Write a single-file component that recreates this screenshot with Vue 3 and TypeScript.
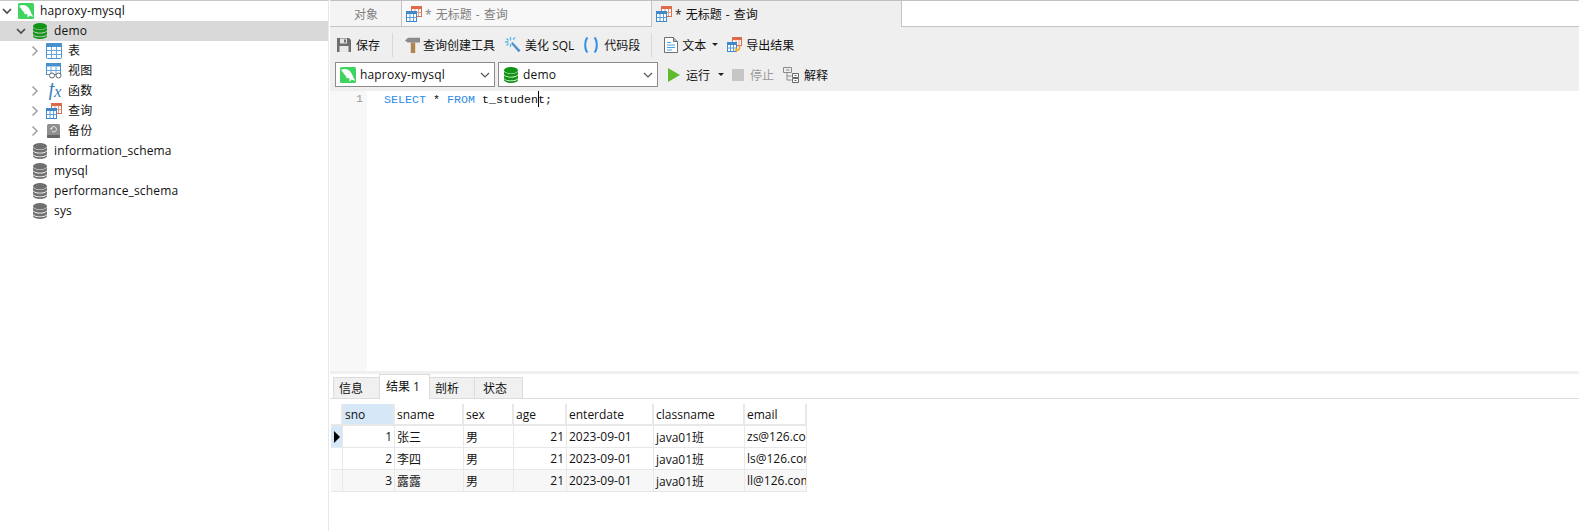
<script setup lang="ts">
interface TreeNode {
  label: string;
  level: number;
  icon: string;
  arrow: "open" | "closed" | "none";
  selected?: boolean;
}

const tree: TreeNode[] = [
  { label: "haproxy-mysql", level: 0, icon: "conn", arrow: "open" },
  { label: "demo", level: 1, icon: "db-green", arrow: "open", selected: true },
  { label: "表", level: 2, icon: "table", arrow: "closed" },
  { label: "视图", level: 2, icon: "view", arrow: "none" },
  { label: "函数", level: 2, icon: "fx", arrow: "closed" },
  { label: "查询", level: 2, icon: "query", arrow: "closed" },
  { label: "备份", level: 2, icon: "backup", arrow: "closed" },
  { label: "information_schema", level: 1, icon: "db-gray", arrow: "none" },
  { label: "mysql", level: 1, icon: "db-gray", arrow: "none" },
  { label: "performance_schema", level: 1, icon: "db-gray", arrow: "none" },
  { label: "sys", level: 1, icon: "db-gray", arrow: "none" },
];

const columns = ["sno", "sname", "sex", "age", "enterdate", "classname", "email"];

const rows = [
  { sno: 1, sname: "张三", sex: "男", age: 21, date: "2023-09-01", cls: "java01班", email: "zs@126.com" },
  { sno: 2, sname: "李四", sex: "男", age: 21, date: "2023-09-01", cls: "java01班", email: "ls@126.com" },
  { sno: 3, sname: "露露", sex: "男", age: 21, date: "2023-09-01", cls: "java01班", email: "ll@126.com" },
];

const resultTabs = ["信息", "结果 1", "剖析", "状态"];
</script>

<template>
  <svg class="sprite" aria-hidden="true">
    <symbol id="conn" viewBox="0 0 16 16">
      <rect width="16" height="16" rx="1.5" fill="#3fd45f" />
      <path d="M1 3C3 2 6 1.600 8.500 3 11 4.500 12 7 13 9.500 13.500 11 14.500 12.500 15.500 13.500 14 13.500 12.800 13.200 11.500 12.400 11 13.300 10.500 14 9.500 14.500 9.800 13 9.500 12 9 11 8 11.300 7 11.200 6 10.800 6.300 10.300 6.400 9.800 6.300 9.300 4.800 8.300 3.800 6.800 3.200 5.500 2.400 4.800 1.600 4 1 3z" fill="#fff" />
    </symbol>
    <symbol id="db-green" viewBox="0 0 16 16">
      <ellipse cx="8" cy="3.200" rx="7" ry="3.200" fill="#129417" />
      <path d="M1 4.400c1.200 1.500 3.800 2.300 7 2.300s5.800-.8 7-2.300v2.900c-.6 1.500-3.400 2.500-7 2.500s-6.400-1-7-2.500z" fill="#129417" />
      <path d="M1 8.300c1.200 1.500 3.800 2.300 7 2.300s5.800-.8 7-2.300v2.800c-.6 1.500-3.400 2.400-7 2.400s-6.400-.9-7-2.400z" fill="#129417" />
      <path d="M1 12.100c1.200 1.400 3.800 2.200 7 2.200s5.800-.8 7-2.200v1.200c-.6 1.700-3.400 2.700-7 2.700s-6.400-1-7-2.700z" fill="#129417" />
    </symbol>
    <symbol id="db-gray" viewBox="0 0 16 16">
      <ellipse cx="8" cy="3.200" rx="7" ry="3.200" fill="#707070" />
      <path d="M1 4.400c1.200 1.500 3.800 2.300 7 2.300s5.800-.8 7-2.300v2.900c-.6 1.500-3.400 2.500-7 2.500s-6.400-1-7-2.500z" fill="#707070" />
      <path d="M1 8.300c1.200 1.500 3.800 2.300 7 2.300s5.800-.8 7-2.300v2.800c-.6 1.500-3.400 2.400-7 2.400s-6.400-.9-7-2.400z" fill="#707070" />
      <path d="M1 12.100c1.200 1.400 3.800 2.200 7 2.200s5.800-.8 7-2.200v1.200c-.6 1.700-3.400 2.700-7 2.700s-6.400-1-7-2.700z" fill="#707070" />
    </symbol>
    <symbol id="table" viewBox="0 0 16 16">
      <rect x=".5" y=".5" width="15" height="15" rx=".8" fill="#fff" stroke="#4a90cf" />
      <rect x="0" y="0" width="16" height="4" rx=".8" fill="#4a90cf" />
      <path d="M5.500 4v11.500M10.500 4v11.500M.5 7.500h15M.5 11.500h15" stroke="#6aa8dc" fill="none" />
    </symbol>
    <symbol id="view" viewBox="0 0 16 16">
      <rect x=".5" y=".5" width="14" height="11" fill="#fff" stroke="#4a90cf" />
      <rect x="0" y="0" width="15" height="3.500" fill="#4a90cf" />
      <path d="M5 4v7M10 4v7M.5 7.500h14" stroke="#6aa8dc" fill="none" />
      <circle cx="6" cy="12.500" r="2.500" fill="#fff" stroke="#666" />
      <circle cx="12.500" cy="12.500" r="2.500" fill="#fff" stroke="#666" />
    </symbol>
    <symbol id="query" viewBox="0 0 16 16">
      <rect x="5.500" y=".5" width="10" height="10" fill="#fff" stroke="#dd6a48" />
      <rect x="5" y="0" width="11" height="3" fill="#dd6a48" />
      <path d="M9 3v7M12.500 3v7M5.500 6.500h10" stroke="#e89a80" fill="none" />
      <rect x=".5" y="5.500" width="10" height="10" fill="#fff" stroke="#3f88c9" />
      <rect x="0" y="5" width="11" height="3" fill="#3f88c9" />
      <path d="M4 8v7M7.500 8v7M.5 11.500h10" stroke="#5c9ed6" fill="none" />
    </symbol>
    <symbol id="backup" viewBox="0 0 16 16">
      <rect x="1" y="1" width="13" height="14" rx="1.500" fill="#8f8f8f" />
      <rect x="1" y="12" width="13" height="3" rx="1" fill="#666" />
      <path d="M5 6.300a2.700 2.700 0 1 1 .9 2" fill="none" stroke="#eee" stroke-width="1" />
      <path d="M3.800 4.900h2.400v2.200z" fill="#eee" />
    </symbol>
    <symbol id="save" viewBox="0 0 16 16">
      <path d="M1 1h12l2 2v12H1z" fill="#6e6e6e" />
      <rect x="4" y="1.500" width="7" height="5" fill="#e2e2e2" />
      <rect x="8" y="2.500" width="2" height="3" fill="#6e6e6e" />
      <rect x="3.500" y="9" width="9" height="6" fill="#e8e8e8" />
    </symbol>
    <symbol id="hammer" viewBox="0 0 16 16">
      <path d="M0 3.500 3 .8h12v4.700H2.600z" fill="#8c8c8c" />
      <rect x="5.800" y="5.500" width="4.400" height="10.500" fill="#b0834f" />
    </symbol>
    <symbol id="wand" viewBox="0 0 16 16">
      <path d="m6 6.500 1.500-1.500 8 8.500-1.800 1.800z" fill="#4a8fc9" />
      <path d="M5.500 0v3.500M5.500 7v3M0 5h3.500M8 2.500l2-2M1.500 1.500l2 2M1.500 8.500l2-2" stroke="#55b6ee" stroke-width="1.300" fill="none" />
    </symbol>
    <symbol id="parens" viewBox="0 0 18 16">
      <path d="M5.500.5C2.500 3.500 2.500 12.500 5.500 15.500M12.500.5c3 3 3 12 0 15" fill="none" stroke="#2e8fe8" stroke-width="2" />
    </symbol>
    <symbol id="doc" viewBox="0 0 14 16">
      <path d="M.5.500h9l4 4v11H.5z" fill="#fff" stroke="#6f6f6f" />
      <path d="M9.500.500v4h4" fill="#bbb" stroke="#6f6f6f" />
      <path d="M3 5.500h4M3 8h8M3 10.500h8M3 13h5" stroke="#4aa3e8" fill="none" />
    </symbol>
    <symbol id="export" viewBox="0 0 16 16">
      <rect x="5.500" y=".5" width="9" height="8" fill="#fff" stroke="#dd6a48" />
      <rect x="5" y="0" width="10" height="3" fill="#dd6a48" />
      <path d="M9 3v5M12 3v5" stroke="#e89a80" fill="none" />
      <rect x=".5" y="5.500" width="9" height="9" fill="#fff" stroke="#3f88c9" />
      <rect x="0" y="5" width="10" height="3" fill="#3f88c9" />
      <path d="M3.500 8v6M6.500 8v6M.5 11h9" stroke="#5c9ed6" fill="none" />
      <path d="M12.500 8.500v2.500a2.200 2.200 0 0 1-2.200 2.200H9" fill="none" stroke="#f5a21b" stroke-width="1.600" />
      <path d="m10 10.800-2.500 2.400 2.500 2.400z" fill="#f5a21b" />
    </symbol>
    <symbol id="explain" viewBox="0 0 16 16">
      <path d="M.5.500h8v5h-8zM3 3h3.500M4 5.500V13h4.500M4 9h4.500" fill="none" stroke="#8a8a8a" />
      <path d="M9.500 6.500h6v4h-6zM9.500 11.500h6v4h-6z" fill="#fff" stroke="#666" />
      <path d="M11.500 8.500h2M11.500 13.500h2" stroke="#666" fill="none" />
    </symbol>
  </svg>

  <div class="app">
    <aside class="sidebar">
      <div
        v-for="node in tree"
        :key="node.label"
        class="tree-row"
        :class="[`lv${node.level}`, { selected: node.selected }]"
      >
        <span class="arrow">
          <svg v-if="node.arrow === 'open'" width="10" height="10" viewBox="0 0 10 10">
            <path d="M1 3l4 4 4-4" fill="none" stroke="#4c4c4c" stroke-width="1.700" />
          </svg>
          <svg v-else-if="node.arrow === 'closed'" width="10" height="12" viewBox="0 0 10 12">
            <path d="M2.500 1.500 7 6l-4.500 4.500" fill="none" stroke="#a6a6a6" stroke-width="1.700" />
          </svg>
        </span>
        <span class="tree-icon">
          <svg v-if="node.icon === 'fx'" width="16" height="17" viewBox="0 0 16 17">
            <text x="2.500" y="13" class="fx">f</text>
            <text x="8" y="14" class="fx small">x</text>
          </svg>
          <svg v-else width="16" height="16"><use :href="`#${node.icon}`" /></svg>
        </span>
        <span class="tree-label">{{ node.label }}</span>
      </div>
    </aside>

    <main class="main">
      <div class="tabbar">
        <div class="tab object">对象</div>
        <div class="tab query-tab">
          <svg width="16" height="16"><use href="#query" /></svg>
          <span class="muted">* 无标题 - 查询</span>
        </div>
        <div class="tab query-tab active">
          <svg width="16" height="16"><use href="#query" /></svg>
          <span>* 无标题 - 查询</span>
        </div>
        <div class="tab-rest"></div>
      </div>

      <div class="toolbar">
        <div class="tool-row">
          <button class="tool save-btn"><svg width="16" height="16"><use href="#save" /></svg>保存</button>
          <i class="sep"></i>
          <button class="tool hammer-btn"><svg width="16" height="16"><use href="#hammer" /></svg>查询创建工具</button>
          <button class="tool wand-btn"><svg width="16" height="16"><use href="#wand" /></svg>美化 SQL</button>
          <button class="tool parens"><svg width="18" height="16"><use href="#parens" /></svg>代码段</button>
          <i class="sep"></i>
          <button class="tool doc-btn"><svg width="14" height="16"><use href="#doc" /></svg>文本<b class="caret"></b></button>
          <button class="tool export-btn"><svg width="16" height="16"><use href="#export" /></svg>导出结果</button>
        </div>
        <div class="tool-row second">
          <div class="select">
            <svg width="16" height="16"><use href="#conn" /></svg>
            <span>haproxy-mysql</span>
            <svg class="chev" width="10" height="6" viewBox="0 0 10 6"><path d="M1 1l4 4 4-4" fill="none" stroke="#555" stroke-width="1.200" /></svg>
          </div>
          <div class="select">
            <svg width="16" height="16"><use href="#db-green" /></svg>
            <span>demo</span>
            <svg class="chev" width="10" height="6" viewBox="0 0 10 6"><path d="M1 1l4 4 4-4" fill="none" stroke="#555" stroke-width="1.200" /></svg>
          </div>
          <button class="tool run">
            <svg width="12" height="14" viewBox="0 0 12 14"><path d="M0 0l12 7-12 7z" fill="#5fbb2c" /></svg>运行<b class="caret"></b>
          </button>
          <button class="tool stop"><i class="stop-box"></i>停止</button>
          <button class="tool explain"><svg width="16" height="16"><use href="#explain" /></svg>解释</button>
        </div>
      </div>

      <div class="editor">
        <div class="gutter">1</div>
        <div class="code">
          <span class="kw">SELECT</span> * <span class="kw">FROM</span> t_studen<span class="cursor"></span>t;
        </div>
      </div>

      <div class="results">
        <div class="result-tabs">
          <div
            v-for="(t, i) in resultTabs"
            :key="t"
            class="result-tab"
            :class="{ active: i === 1 }"
          >{{ t }}</div>
        </div>
        <table class="grid">
          <colgroup>
            <col class="c0" /><col class="c1" /><col class="c2" /><col class="c3" /><col class="c4" /><col class="c5" /><col class="c6" /><col class="c7" />
          </colgroup>
          <thead>
            <tr>
              <th class="ind"></th>
              <th v-for="(c, i) in columns" :key="c" :class="{ current: i === 0 }">{{ c }}</th>
            </tr>
          </thead>
          <tbody>
            <tr v-for="(r, i) in rows" :key="r.sno" :class="{ stripe: i === 2 }">
              <td class="ind" :class="{ current: i === 0 }"><b v-if="i === 0" class="pointer"></b></td>
              <td class="num">{{ r.sno }}</td>
              <td>{{ r.sname }}</td>
              <td>{{ r.sex }}</td>
              <td class="num">{{ r.age }}</td>
              <td>{{ r.date }}</td>
              <td>{{ r.cls }}</td>
              <td>{{ r.email }}</td>
            </tr>
          </tbody>
        </table>
      </div>
    </main>
  </div>
</template>

<style>
html,
body {
  margin: 0;
  background: #fff;
}
</style>

<style scoped>
.sprite {
  position: absolute;
  width: 0;
  height: 0;
}

.app {
  display: flex;
  height: 100vh;
  overflow: hidden;
  font-family: "Open Sans", "Noto Sans CJK SC", sans-serif;
  font-size: 12px;
  color: #111;
  background: #fff;
}

.sidebar {
  width: 329px;
  flex: none;
  box-sizing: border-box;
  border-top: 1px solid #c8c8c8;
  border-right: 1px solid #e8e8e8;
  margin-right: 1px;
}

.tree-row {
  display: flex;
  align-items: center;
  height: 20px;
}

.tree-row.selected {
  background: #d9d9d9;
}

.tree-label {
  letter-spacing: 0.16px;
  margin-top: -2px;
}

.lv0 {
  padding-left: 2px;
}

.lv1 {
  padding-left: 16px;
}

.lv2 {
  padding-left: 30px;
}

.arrow {
  width: 16px;
  box-sizing: border-box;
  padding-right: 6px;
  display: flex;
  justify-content: center;
}

.tree-icon {
  width: 16px;
  height: 16px;
  margin-right: 6px;
}

.tree-icon svg,
.tool svg,
.select svg,
.query-tab svg {
  display: block;
  flex: none;
}

.fx {
  font-family: "Liberation Serif", serif;
  font-style: italic;
  font-size: 20px;
  fill: #3b7fb8;
}

.fx.small {
  font-size: 17px;
}

.main {
  flex: 1;
  min-width: 0;
  display: flex;
  flex-direction: column;
}

.tabbar {
  display: flex;
  height: 27px;
  flex: none;
  box-sizing: border-box;
  border-top: 1px solid #c0c0c0;
  background: #f0f0f0;
}

.tab {
  display: flex;
  align-items: center;
  box-sizing: border-box;
  color: #808080;
  word-spacing: 1px;
}

.object {
  width: 72px;
  justify-content: center;
  padding-left: 1px;
  background: #f4f4f4;
  border-bottom: 1px solid #c4c4c4;
  border-right: 1px solid #c4c4c4;
}

.query-tab {
  width: 250px;
  padding-left: 4px;
  gap: 3px;
  background: #f8f8f8;
  border-bottom: 1px solid #c4c4c4;
  border-right: 1px solid #c4c4c4;
}

.query-tab.active {
  background: #efefef;
  border-bottom: none;
  color: #111;
}

.muted {
  color: #808080;
}

.tab-rest {
  flex: 1;
  background: #fff;
  border-bottom: 1px solid #c4c4c4;
}

.toolbar {
  flex: none;
  background: #efefef;
  height: 64px;
}

.tool-row {
  display: flex;
  align-items: center;
  height: 35px;
  padding-left: 6px;
}

.tool-row.second {
  height: 25px;
  padding-left: 5px;
  gap: 3px;
}

.tool {
  display: flex;
  align-items: center;
  gap: 5px;
  border: none;
  background: none;
  padding: 0;
  margin-right: 10px;
  font: inherit;
  color: inherit;
}

.save-btn {
  gap: 4px;
  margin-right: 12px;
}

.hammer-btn {
  gap: 2px;
}

.wand-btn {
  gap: 4px;
  margin-right: 8px;
}

.parens {
  gap: 4px;
  margin-right: 11px;
}

.doc-btn {
  gap: 4px;
  margin-right: 9px;
}

.export-btn {
  gap: 3px;
}

.sep {
  width: 1px;
  height: 24px;
  background: #d8d8d8;
  margin-right: 12px;
}

.caret {
  width: 0;
  height: 0;
  margin-left: 2px;
  border-left: 3px solid transparent;
  border-right: 3px solid transparent;
  border-top: 3px solid #222;
}

.select {
  width: 160px;
  height: 25px;
  box-sizing: border-box;
  display: flex;
  align-items: center;
  gap: 4px;
  padding: 0 4px;
  background: #fff;
  border: 1px solid #8c8c8c;
  font-size: 12px;
}

.select span {
  flex: 1;
  letter-spacing: 0.16px;
}

.chev {
  margin-right: 0;
}

.run {
  gap: 6px;
  margin-left: 7px;
  margin-right: 5px;
}

.stop {
  gap: 6px;
  color: #9a9a9a;
  margin-right: 6px;
}

.stop-box {
  width: 12px;
  height: 12px;
  background: #c6c6c6;
}

.explain {
  gap: 5px;
  margin-right: 0;
}

.editor {
  flex: 1;
  min-height: 0;
  display: flex;
  background: #fff;
}

.gutter {
  width: 37px;
  box-sizing: border-box;
  background: #f8f8f8;
  text-align: right;
  padding-right: 4px;
  color: #999;
  font-family: "Liberation Mono", monospace;
  font-size: 11.67px;
  line-height: 17px;
}

.code {
  padding-left: 17px;
  font-family: "Liberation Mono", monospace;
  font-size: 11.67px;
  line-height: 17px;
  white-space: pre;
}

.kw {
  color: #2e8be6;
}

.cursor {
  display: inline-block;
  width: 1px;
  height: 16px;
  background: #000;
  vertical-align: -4px;
  margin-right: -1px;
}

.results {
  flex: none;
  height: 160px;
  box-sizing: border-box;
  border-top: 3px solid #f0f0f0;
}

.result-tabs {
  display: flex;
  align-items: flex-end;
  height: 25px;
  box-sizing: border-box;
  padding-left: 3px;
  border-bottom: 1px solid #dcdcdc;
}

.result-tab {
  height: 21px;
  box-sizing: border-box;
  padding-left: 5px;
  display: flex;
  align-items: center;
  background: #f0f0f0;
  border: 1px solid #dcdcdc;
  border-bottom: none;
  margin-left: -1px;
  width: 46px;
}

.result-tab:first-child {
  margin-left: 0;
  width: 47px;
}

.result-tab:last-child {
  width: 49px;
  padding-left: 8px;
}

.result-tab.active {
  width: 51px;
  height: 25px;
  padding-left: 6px;
  padding-bottom: 2px;
  background: #fff;
  margin-bottom: -1px;
}

.grid {
  margin: 5px 0 0 1px;
  border-collapse: separate;
  border-spacing: 0;
  table-layout: fixed;
  width: 476px;
  font-size: 12px;
}

.c0 {
  width: 12px;
}

.c1 {
  width: 52px;
}

.c2 {
  width: 69px;
}

.c3 {
  width: 50px;
}

.c4 {
  width: 53px;
}

.c5 {
  width: 87px;
}

.c6 {
  width: 91px;
}

.c7 {
  width: 62px;
}

th,
td {
  box-sizing: border-box;
  padding: 0 2px 0 2px;
  overflow: hidden;
  white-space: nowrap;
  text-align: left;
  font-weight: 400;
  border-right: 1px solid #e8e8e8;
  border-bottom: 1px solid #e8e8e8;
}

th {
  height: 22px;
  border-right: 2px solid #e8e8e8;
  border-bottom: 2px solid #e8e8e8;
}

td {
  height: 22px;
}

th.current,
td.current {
  background: #d6e8f8;
}

.ind {
  padding: 0;
}

.num {
  text-align: right;
}

.stripe td {
  background: #f7f7f7;
}

.pointer {
  display: block;
  width: 0;
  height: 0;
  margin-left: 3px;
  border-top: 6px solid transparent;
  border-bottom: 6px solid transparent;
  border-left: 6px solid #000;
}
</style>
